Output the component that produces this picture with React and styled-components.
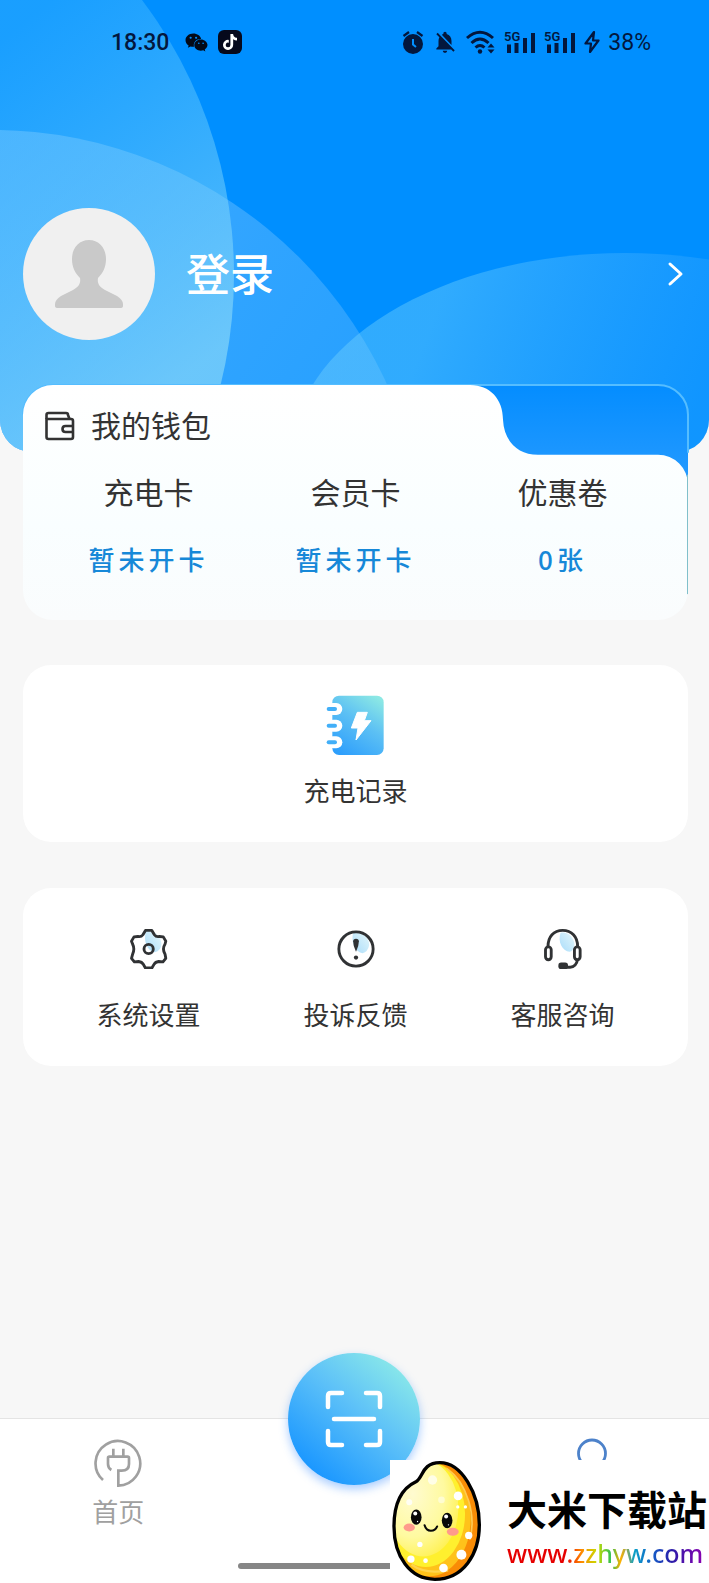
import React from "react"
import styled, { createGlobalStyle } from "styled-components"
import { FaTiktok, FaWeixin } from "react-icons/fa6"
import { MdNotificationsOff } from "react-icons/md"


const GlobalStyle = createGlobalStyle`
    body {
        margin: 0;
        background-color: #f7f7f7;
        color: #333;
        font-family: "Noto Sans CJK SC", sans-serif;
    }

    a {
        color: inherit;
        text-decoration: none;
    }

    svg {
        display: block;
        flex-shrink: 0;
    }
`

const Page = styled.div`
    position: relative;
    min-height: 100vh;
    display: flex;
    flex-direction: column;
`

const Header = styled.header`
    position: relative;
    padding-bottom: 112px;
    border-radius: 0 0 32px 32px;
    overflow: hidden;
    background-color: #008fff;
`

const Waves = styled.svg`
    position: absolute;
    top: 0;
    left: 0;
    width: 100%;
    height: 100%;
`

const StatusBar = styled.div`
    position: relative;
    display: flex;
    align-items: center;
    justify-content: space-between;
    height: 84px;
    padding: 0 58px 0 111px;
    color: #03173d;
    font-family: Roboto, sans-serif;
    font-size: 23px;
`

const StatusGroup = styled.div`
    display: flex;
    align-items: center;
    gap: ${props => props.$gap}px;
`

const Time = styled.span`
    margin-right: 6px;
    font-weight: 500;
`

const AppBadge = styled.span`
    display: flex;
    align-items: center;
    justify-content: center;
    width: 24px;
    height: 24px;
    border-radius: 6px;
    background-color: #06091c;
    color: #fff;
    font-size: 16px;
`

const Profile = styled.a`
    position: relative;
    display: flex;
    align-items: center;
    margin-top: 124px;
    padding: 0 24px 0 23px;
`

const Avatar = styled.span`
    width: 132px;
    height: 132px;
    border-radius: 50%;
    overflow: hidden;
    background-color: #f0f0f0;
`

const LoginText = styled.span`
    flex: 1;
    margin-left: 31px;
    padding-bottom: 4px;
    color: #fff;
    font-size: 44px;
    font-weight: 500;
    line-height: 60px;
`

const Main = styled.main`
    display: flex;
    flex-direction: column;
    padding: 0 21px 0 23px;
`

const Wallet = styled.section`
    position: relative;
    margin-top: -67px;
    padding: 17px 22px 43px;
`

const WalletShape = styled.svg`
    position: absolute;
    top: 0;
    left: 0;
    width: 100%;
    height: 100%;
    overflow: visible;
`

const WalletTitle = styled.h2`
    position: relative;
    display: flex;
    align-items: center;
    gap: 16px;
    margin: 0 0 23px;
    font-size: 30px;
    font-weight: 400;
    line-height: 44px;

    svg {
        margin-top: 4px;
    }
`

const Columns = styled.div`
    position: relative;
    display: grid;
    grid-template-columns: repeat(3, 1fr);
`

const WalletItem = styled.a`
    display: flex;
    flex-direction: column;
    align-items: center;
    gap: 28px;
`

const WalletName = styled.span`
    font-size: 30px;
    line-height: 44px;
`

const WalletValue = styled.span`
    color: #1688d8;
    font-size: 26px;
    font-weight: 500;
    letter-spacing: 4px;
    line-height: 36px;
`

const Card = styled.section`
    margin-top: ${props => props.$top}px;
    padding: ${props => props.$pad};
    border-radius: 28px;
    background-color: #fff;
`

const Entry = styled.a`
    display: flex;
    flex-direction: column;
    align-items: center;
    gap: ${props => props.$gap}px;
    font-size: 26px;
    line-height: 36px;
`

const TabBar = styled.nav`
    margin-top: auto;
    padding-bottom: 14px;
    border-top: 1px solid #e4e4e4;
    background-color: #fff;
`

const Tabs = styled.div`
    display: grid;
    grid-template-columns: repeat(3, 1fr);
    justify-items: center;
    align-items: start;
`

const Tab = styled.a`
    display: flex;
    flex-direction: column;
    align-items: center;
    gap: 5px;
    padding-top: 19px;
    color: #a0a0a0;
    font-size: 26px;
    line-height: 36px;
`

const ScanButton = styled.button`
    display: flex;
    align-items: center;
    justify-content: center;
    width: 132px;
    height: 132px;
    margin-top: -66px;
    padding: 0;
    border: none;
    border-radius: 50%;
    background: linear-gradient(40deg, #1c98ff 15%, #5dc1f8 55%, #93f0e6 95%);
    box-shadow: 0 4px 10px rgba(40, 130, 255, 0.4);
    cursor: pointer;
`

const HomeIndicator = styled.div`
    width: 33%;
    height: 6px;
    margin: 34px auto 0;
    border-radius: 3px;
    background-color: #868686;
`

const SiteBadge = styled.a`
    position: absolute;
    right: 0;
    bottom: 0;
    display: flex;
    align-items: center;
    gap: 24px;
    padding-right: 2px;
    background-color: #fff;
`

const SiteText = styled.span`
    padding-top: 4px;
`

const SiteName = styled.strong`
    display: block;
    color: #000;
    font-size: 40px;
    font-weight: 700;
    line-height: 58px;
`

const SiteUrl = styled.span`
    display: block;
    width: max-content;
    background: linear-gradient(90deg, #e60000 30%, #ff8a00 38%, #c8dc00 46%, #2fc052 53%, #ffb000 58%, #0aa0c8 65%, #1560c8 74%, #2a1ca8 84%, #8a00b0 100%);
    background-clip: text;
    color: transparent;
    font-family: "Noto Sans", sans-serif;
    font-size: 25px;
    font-weight: 500;
    line-height: 32px;
`

const HeaderWaves = () => (
    <Waves viewBox="0 0 709 452" preserveAspectRatio="xMidYMid slice" aria-hidden="true">
        <defs>
            <linearGradient id="waveLeft" gradientUnits="userSpaceOnUse" x1="0" y1="40" x2="230" y2="340">
                <stop offset="0" stopColor="#55c4ff" stopOpacity="0.3" />
                <stop offset="1" stopColor="#8fdcf8" stopOpacity="0.62" />
            </linearGradient>
            <linearGradient id="waveLow" gradientUnits="userSpaceOnUse" x1="0" y1="129" x2="380" y2="400">
                <stop offset="0" stopColor="#8acbff" stopOpacity="0.46" />
                <stop offset="1" stopColor="#80c8ff" stopOpacity="0.3" />
            </linearGradient>
            <linearGradient id="waveRight" gradientUnits="userSpaceOnUse" x1="440" y1="300" x2="700" y2="400">
                <stop offset="0" stopColor="#73d2fc" stopOpacity="0.42" />
                <stop offset="1" stopColor="#50b0ff" stopOpacity="0.2" />
            </linearGradient>
        </defs>
        <circle cx="-8" cy="564" r="434" fill="url(#waveLow)" />
        <circle cx="-223" cy="275" r="457" fill="url(#waveLeft)" />
        <ellipse cx="625" cy="457" rx="334" ry="204" fill="url(#waveRight)" />
    </Waves>
)

const AlarmIcon = () => (
    <svg width="22" height="24" viewBox="0 0 22 24">
        <circle cx="11" cy="14" r="10" fill="currentColor" />
        <path d="M1.5 6L7 2M20.5 6L15 2" stroke="currentColor" strokeWidth="2.2" />
        <path d="M11 9V14.5L14 17" stroke="#008fff" strokeWidth="2" fill="none" />
    </svg>
)

const WifiIcon = () => (
    <svg width="30" height="24" viewBox="0 0 30 24" fill="none" stroke="currentColor" strokeWidth="3">
        <path d="M1 8Q14 -3.500 27 8M5.500 13Q14 5 22.500 13M9.500 17.500Q14 13.500 18.500 17.500" />
        <circle cx="14" cy="21.500" r="2.200" fill="currentColor" stroke="none" />
        <path d="M25 13.500L28.500 17.500H21.500ZM25 23.500L28.500 19.500H21.500Z" fill="currentColor" stroke="none" />
    </svg>
)

const SignalIcon = () => (
    <svg width="32" height="24" viewBox="0 0 32 24">
        <text x="0" y="11" fontSize="13" fontWeight="600" fill="currentColor">5G</text>
        <path d="M3 14.500H7V23H3ZM10.500 13H14.500V23H10.500ZM19 8H23V23H19ZM27 3H31V23H27Z" fill="currentColor" />
    </svg>
)

const ChargeIcon = () => (
    <svg width="16" height="24" viewBox="0 0 16 24" fill="none" stroke="currentColor" strokeWidth="2.200" strokeLinejoin="round">
        <path d="M10 2L1.500 13.500H7L6 22L14.500 10.500H9Z" />
    </svg>
)

const PersonIcon = () => (
    <svg width="132" height="132" viewBox="0 0 132 132">
        <path d="M66 32C76 32 83 40 83 51C83 59 80 65 75 70C74 76 77 79 82 82L94 88Q100 92 100 96V98Q100 100 97 100H35Q32 100 32 98V96Q32 92 38 88L50 82C55 79 58 76 57 70C52 65 49 59 49 51C49 40 56 32 66 32Z" fill="#c9c9c9" />
    </svg>
)

const ArrowIcon = () => (
    <svg width="18" height="26" viewBox="0 0 18 26" fill="none" stroke="#fff" strokeWidth="3" strokeLinecap="round" strokeLinejoin="round">
        <path d="M3 3L14 13L3 23" />
    </svg>
)

const WalletIcon = () => (
    <svg width="30" height="30" viewBox="0 0 30 30" fill="none" stroke="#333" strokeWidth="2.600" strokeLinejoin="round">
        <path d="M1.500 8V4Q1.500 2 3.500 2H21Q23 2 23 4L24.500 8" />
        <path d="M1.500 8H26Q28 8 28 10V26Q28 28 26 28H3.500Q1.500 28 1.500 26Z" />
        <path d="M28 15H20.500Q17.500 15 17.500 18T20.500 21H28" />
    </svg>
)

const WalletBackdrop = () => (
    <WalletShape viewBox="0 0 665 236" preserveAspectRatio="none" aria-hidden="true">
        <defs>
            <linearGradient id="walletBack" x1="0" y1="0" x2="0" y2="1">
                <stop offset="0" stopColor="#048dff" />
                <stop offset="1" stopColor="#2a9cff" />
            </linearGradient>
            <linearGradient id="walletFront" x1="0" y1="0" x2="0" y2="1">
                <stop offset="0" stopColor="#fff" />
                <stop offset="0.600" stopColor="#f9feff" />
                <stop offset="1" stopColor="#fafcfd" />
            </linearGradient>
        </defs>
        <path d="M30 0H635A30 30 0 0 1 665 30V110H0V30A30 30 0 0 1 30 0Z" fill="url(#walletBack)" />
        <path d="M0 30A30 30 0 0 1 30 0H635A30 30 0 0 1 665 30V68" fill="none" stroke="#55bdff" strokeWidth="2" />
        <path d="M30 0H447C467 0 480 14 480 35C481 56 494 70 515 70H635A30 30 0 0 1 665 100V206A30 30 0 0 1 635 236H30A30 30 0 0 1 0 206V30A30 30 0 0 1 30 0Z" fill="url(#walletFront)" />
        <path d="M664.500 90V210" stroke="#7fc0cb" strokeWidth="1" />
    </WalletShape>
)

const RecordIcon = () => (
    <svg width="60" height="60" viewBox="138 45 180 180">
        <defs>
            <linearGradient id="notebook" gradientUnits="userSpaceOnUse" x1="180" y1="220" x2="290" y2="50">
                <stop offset="0" stopColor="#2e9ffc" />
                <stop offset="0.550" stopColor="#5cc0f4" />
                <stop offset="1" stopColor="#8ce8e4" />
            </linearGradient>
        </defs>
        <rect x="157" y="47" width="154" height="178" rx="20" fill="url(#notebook)" />
        {[87, 137, 187].map(y => (
            <g key={y}>
                <rect x="140" y={y - 18} width="47" height="36" rx="18" fill="#fff" />
                <path d={`M146 ${y}H165`} stroke="#42aff8" strokeWidth="12" strokeLinecap="round" />
            </g>
        ))}
        <path d="M232 97H262L253 122H273L228 180L234 144H214Z" fill="#fff" stroke="#fff" strokeWidth="3" strokeLinejoin="round" />
    </svg>
)

const Tint = () => (
    <defs>
        <linearGradient id="tint" x1="1" y1="0" x2="0" y2="1">
            <stop offset="0" stopColor="#e4f7fb" />
            <stop offset="1" stopColor="#a9dcfa" />
        </linearGradient>
    </defs>
)

const SettingsIcon = () => (
    <svg width="40" height="40" viewBox="136 59 112 112" fill="none" stroke="#303234" strokeWidth="8" strokeLinejoin="round">
        <Tint />
        <path d="M183 66C205 60 225 80 227 100Q226 120 208 124C186 120 176 92 183 66Z" fill="url(#tint)" stroke="none" />
        <path d="M182 63H200L207 75Q212 82 221 80L232 81L239 93L237 101Q228 115 237 130L239 141L231 151L219 150Q210 151 206 158L200 168H182L176 158Q172 151 163 150L151 151L143 141L146 130Q153 115 146 101L143 93L150 81L161 80Q170 82 175 75Z" />
        <circle cx="191" cy="115" r="13" />
    </svg>
)

const FeedbackIcon = () => (
    <svg width="40" height="40" viewBox="715 59 112 112">
        <path d="M763 70C785 64 808 82 808 104Q804 124 789 127C766 122 757 92 763 70Z" fill="url(#tint)" />
        <circle cx="771" cy="115" r="48" fill="none" stroke="#303234" strokeWidth="8" />
        <path d="M763 93Q763 86 771 86T779 93Q779 107 771 123Q763 107 763 93Z" fill="#303234" />
        <circle cx="771" cy="139" r="6" fill="#303234" />
    </svg>
)

const ServiceIcon = () => (
    <svg width="40" height="40" viewBox="1295 57 112 112" fill="none" stroke="#303234" strokeWidth="8">
        <path d="M1344 68C1362 62 1382 80 1383 100Q1382 118 1370 121C1348 118 1336 92 1344 68Z" fill="url(#tint)" stroke="none" />
        <path d="M1309 106C1309 78 1325 61 1350 61S1392 78 1392 106" />
        <rect x="1302" y="107" width="16" height="36" rx="8" />
        <rect x="1383" y="107" width="16" height="36" rx="8" />
        <path d="M1392 142Q1388 164 1371 164H1356" />
        <rect x="1338" y="151" width="27" height="18" rx="8" fill="#303234" stroke="none" />
    </svg>
)

const HomeIcon = () => (
    <svg width="50" height="50" viewBox="71 82 150 150" fill="none" stroke="currentColor" strokeWidth="8">
        <path d="M101 208A67 67 0 1 1 147 225V180H157Q179 180 179 160V142Q179 138 175 138H120Q116 138 116 142V160Q116 172 126 178" />
        <path d="M132 114V138M162 114V138" />
    </svg>
)

const MineIcon = () => (
    <svg width="50" height="50" viewBox="0 0 50 50" fill="none" stroke="#4d82ca" strokeWidth="2.800">
        <circle cx="26" cy="15.500" r="13.500" />
        <path d="M4 48C4 36 13 31 26 31S48 36 48 48" />
    </svg>
)

const ScanIcon = () => (
    <svg width="58" height="58" viewBox="0 0 58 58" fill="none" stroke="#fff" strokeWidth="4.500" strokeLinecap="round" strokeLinejoin="round">
        <path d="M17 3H6Q3 3 3 6V17M41 3H52Q55 3 55 6V17M17 55H6Q3 55 3 52V41M41 55H52Q55 55 55 52V41M9 29H49" />
    </svg>
)

const RiceIcon = () => (
    <svg width="93" height="123" viewBox="30 90 280 370" aria-hidden="true">
        <defs>
            <clipPath id="grain">
                <path d="M180 98C245 98 299 190 299 285C299 375 250 449 165 449C90 449 42 380 42 290C42 215 65 175 108 155C130 144 125 98 180 98Z" />
            </clipPath>
            <radialGradient id="grainLight" cx="0.350" cy="0.350" r="0.750">
                <stop offset="0" stopColor="#fffbd0" />
                <stop offset="0.600" stopColor="#fffaa0" />
                <stop offset="1" stopColor="#fff04a" />
            </radialGradient>
        </defs>
        <g clipPath="url(#grain)">
            <path d="M30 90H310V460H30Z" fill="#f98c06" />
            <ellipse cx="148" cy="268" rx="125" ry="172" fill="#ffc21a" />
            <ellipse cx="138" cy="252" rx="118" ry="160" fill="#fff02e" />
            <ellipse cx="130" cy="235" rx="106" ry="145" fill="url(#grainLight)" />
            <path d="M200 115C265 160 290 260 270 330" fill="none" stroke="#ffca52" strokeWidth="5" />
            <path d="M95 405Q135 435 205 422" fill="none" stroke="#ffd44d" strokeWidth="7" />
            <g fill="#fff">
                <circle cx="235" cy="198" r="13" />
                <circle cx="234" cy="231" r="5" />
                <circle cx="257" cy="231" r="5" />
                <circle cx="267" cy="317" r="11" />
                <circle cx="245" cy="375" r="15" />
                <circle cx="191" cy="415" r="13" />
                <circle cx="93" cy="388" r="11" />
                <circle cx="137" cy="393" r="7" />
                <circle cx="120" cy="344" r="8" />
                <circle cx="158" cy="150" r="14" opacity="0.700" />
                <circle cx="88" cy="217" r="9" opacity="0.800" />
                <circle cx="185" cy="210" r="10" opacity="0.500" />
            </g>
        </g>
        <path d="M180 98C245 98 299 190 299 285C299 375 250 449 165 449C90 449 42 380 42 290C42 215 65 175 108 155C130 144 125 98 180 98Z" fill="none" stroke="#000" strokeWidth="10" />
        <ellipse cx="88" cy="293" rx="17" ry="12" fill="#ff9b8c" />
        <ellipse cx="219" cy="306" rx="18" ry="12" fill="#ff9b8c" />
        <ellipse cx="109" cy="262" rx="16" ry="23" fill="#080808" />
        <ellipse cx="202" cy="272" rx="16" ry="23" fill="#080808" />
        <circle cx="106" cy="251" r="6" fill="#fff" />
        <circle cx="199" cy="260" r="6" fill="#fff" />
        <circle cx="113" cy="275" r="2" fill="#fff" />
        <circle cx="206" cy="285" r="2" fill="#fff" />
        <path d="M134 286Q139 303 153 303T172 290" fill="none" stroke="#080808" strokeWidth="6" strokeLinecap="round" />
    </svg>
)

const walletItems = [
    { name: "充电卡", value: "暂未开卡" },
    { name: "会员卡", value: "暂未开卡" },
    { name: "优惠卷", value: "0张" },
]

const services = [
    { name: "系统设置", Icon: SettingsIcon },
    { name: "投诉反馈", Icon: FeedbackIcon },
    { name: "客服咨询", Icon: ServiceIcon },
]

const App = () => (
    <Page>
        <GlobalStyle />

        <Header>
            <HeaderWaves />
            <StatusBar>
                <StatusGroup $gap={10}>
                    <Time>18:30</Time>
                    <FaWeixin size={23} color="#030a18" />
                    <AppBadge><FaTiktok /></AppBadge>
                </StatusGroup>
                <StatusGroup $gap={8}>
                    <AlarmIcon />
                    <MdNotificationsOff size={26} />
                    <WifiIcon />
                    <SignalIcon />
                    <SignalIcon />
                    <ChargeIcon />
                    <span>38%</span>
                </StatusGroup>
            </StatusBar>

            <Profile href="#login">
                <Avatar><PersonIcon /></Avatar>
                <LoginText>登录</LoginText>
                <ArrowIcon />
            </Profile>
        </Header>

        <Main>
            <Wallet>
                <WalletBackdrop />
                <WalletTitle>
                    <WalletIcon />
                    我的钱包
                </WalletTitle>
                <Columns>
                    {walletItems.map(item => (
                        <WalletItem key={item.name} href="#wallet">
                            <WalletName>{item.name}</WalletName>
                            <WalletValue>{item.value}</WalletValue>
                        </WalletItem>
                    ))}
                </Columns>
            </Wallet>

            <Card $top={45} $pad="30px 22px 34px">
                <Entry href="#records" $gap={17}>
                    <RecordIcon />
                    充电记录
                </Entry>
            </Card>

            <Card $top={46} $pad="41px 22px 34px">
                <Columns>
                    {services.map(({ name, Icon }) => (
                        <Entry key={name} href="#service" $gap={27}>
                            <Icon />
                            {name}
                        </Entry>
                    ))}
                </Columns>
            </Card>
        </Main>

        <TabBar>
            <Tabs>
                <Tab href="#home">
                    <HomeIcon />
                    首页
                </Tab>
                <ScanButton type="button" aria-label="扫码">
                    <ScanIcon />
                </ScanButton>
                <Tab href="#mine" aria-label="我的">
                    <MineIcon />
                </Tab>
            </Tabs>
            <HomeIndicator />
        </TabBar>

        <SiteBadge href="#site">
            <RiceIcon />
            <SiteText>
                <SiteName>大米下载站</SiteName>
                <SiteUrl>www.zzhyw.com</SiteUrl>
            </SiteText>
        </SiteBadge>
    </Page>
)

export default App
